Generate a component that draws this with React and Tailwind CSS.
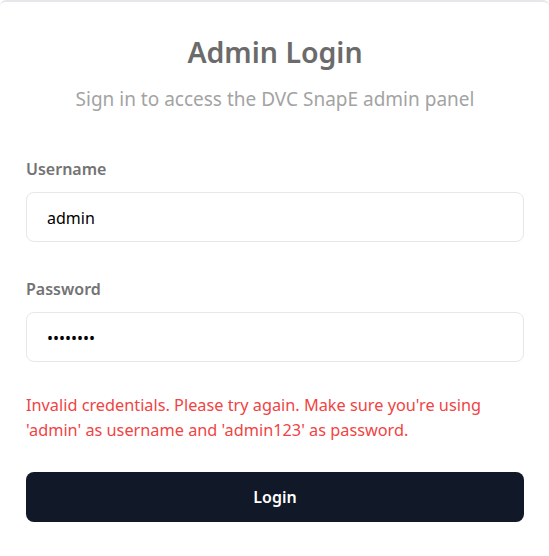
import React, { useState } from "react";

const App = () => {
  const [username, setUsername] = useState("admin");
  const [password, setPassword] = useState("wrongpwd");

  return (
    <div className="min-h-[556px] bg-white [font-family:'Noto_Sans',sans-serif]">
      <div className="border-t-2 border-gray-200 rounded-t-md pl-[26px] pr-[25px] pt-[32px] pb-8">
        <h1 className="text-center text-[28.5px] leading-[36px] font-semibold text-[#6b6b6b]">
          Admin Login
        </h1>
        <p className="mt-[15px] text-center text-[19px] leading-[28px] text-[#a3a3a3]">
          Sign in to access the DVC SnapE admin panel
        </p>

        <form className="mt-[44px]" onSubmit={(e) => e.preventDefault()}>
          <label className="block text-base leading-6 font-semibold text-[#737373] mb-[11px]">
            Username
          </label>
          <input
            type="text"
            value={username}
            onChange={(e) => setUsername(e.target.value)}
            className="block w-full h-[50px] rounded-lg border border-[#e5e7eb] pl-5 pr-5 pt-[2px] text-base text-black outline-none"
          />

          <label className="block mt-[35px] text-base leading-6 font-semibold text-[#737373] mb-[11px]">
            Password
          </label>
          <input
            type="password"
            value={password}
            onChange={(e) => setPassword(e.target.value)}
            className="block w-full h-[50px] rounded-lg border border-[#e5e7eb] pl-5 pr-5 pt-[2px] text-base text-black outline-none"
          />

          <p className="mt-[31px] text-[16.3px] leading-[25px] text-[#ef4444]">
            Invalid credentials. Please try again. Make sure you're using 'admin' as username and 'admin123' as password.
          </p>

          <button
            type="submit"
            className="mt-[29px] block w-full h-[50px] rounded-lg bg-[#111827] text-white text-base font-semibold"
          >
            Login
          </button>
        </form>
      </div>
    </div>
  );
};

export default App;
